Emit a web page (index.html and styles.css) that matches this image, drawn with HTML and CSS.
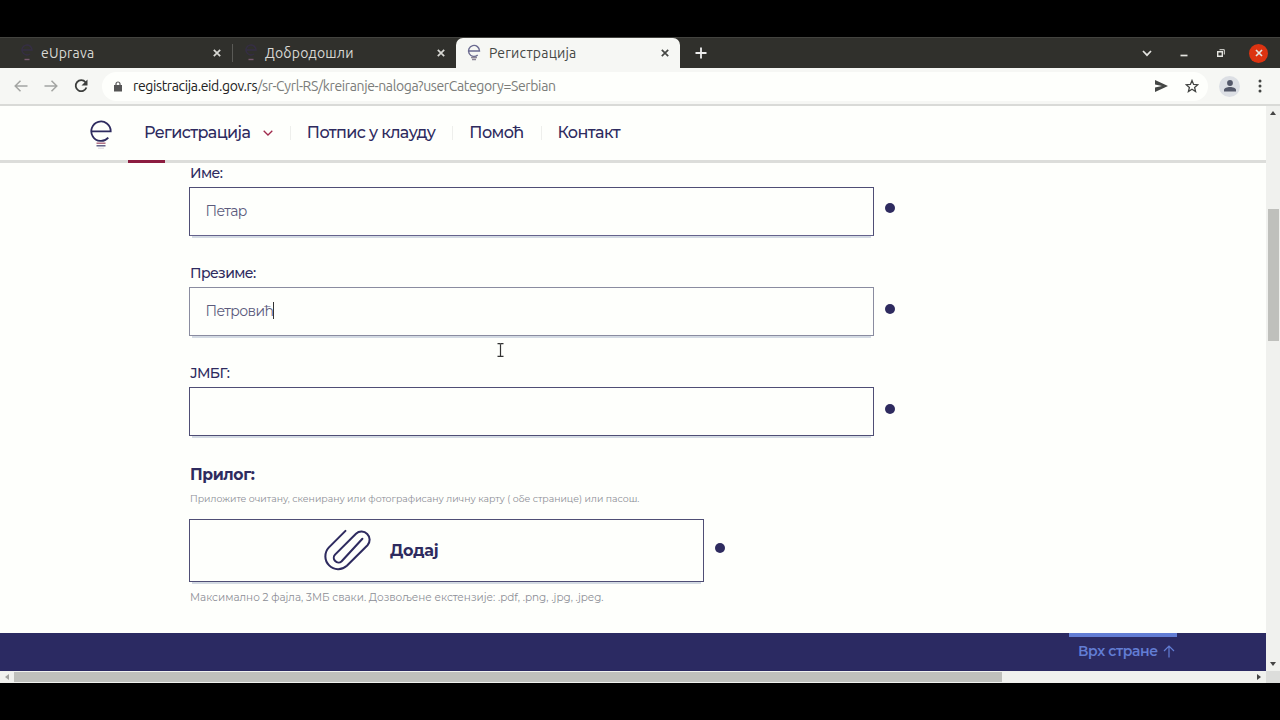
FILE: index.html
```html
<!DOCTYPE html>
<html lang="sr-Cyrl">
<head>
<meta charset="utf-8">
<title>Регистрација</title>
<link rel="stylesheet" href="styles.css">
</head>
<body>
<div class="window">

<div class="tabs">
	<div class="tab tab-first">
		<svg class="favicon" viewBox="0 0 14 18"><path d="M2 6h10a5 5 0 1 0-2 4" stroke="#352e44"/><path d="M4.500 15.500h5" stroke="#7a5a70"/></svg>
		<span class="tab-title">eUprava</span>
		<svg class="close" viewBox="0 0 8 8"><path d="M.8.8l6.400 6.400M7.200.8L.8 7.200"/></svg>
	</div>
	<div class="tab tab-second">
		<svg class="favicon" viewBox="0 0 14 18"><path d="M2 6h10a5 5 0 1 0-2 4" stroke="#352e44"/><path d="M4.500 15.500h5" stroke="#7a5a70"/></svg>
		<span class="tab-title">Добродошли</span>
		<svg class="close" viewBox="0 0 8 8"><path d="M.8.8l6.400 6.400M7.200.8L.8 7.200"/></svg>
	</div>
	<div class="tab tab-active">
		<svg class="favicon" viewBox="0 0 14 18"><path d="M1.500 7h11a5.500 5.500 0 1 0-1.800 4" stroke="#6a6a90"/><path d="M4 13.500h6M5 15.500h4" stroke="#8d8696"/></svg>
		<span class="tab-title">Регистрација</span>
		<svg class="close" viewBox="0 0 8 8"><path d="M.8.8l6.400 6.400M7.200.8L.8 7.200"/></svg>
	</div>
	<svg class="new-tab" viewBox="0 0 12 12"><path d="M6 .5v11M.5 6h11"/></svg>
	<div class="window-buttons">
		<svg width="10" height="7" viewBox="0 0 10 7"><path d="M1 1l4 4.200L9 1"/></svg>
		<svg class="minimize" width="8" height="8" viewBox="0 0 8 8"><path d="M.5 6.500h7"/></svg>
		<svg class="restore" width="8" height="8" viewBox="0 0 8 8"><path d="M.7 2.700h4.600v4.600H.7z"/><path d="M2.500.7h4.800v4.800" stroke-width="1"/></svg>
		<span class="close-window"><svg width="8" height="8" viewBox="0 0 8 8"><path d="M1 1l6 6M7 1L1 7"/></svg></span>
	</div>
</div>

<div class="toolbar">
	<svg class="back" viewBox="0 0 14 12"><path d="M13.500 6H1.200M6.500.7L1.200 6l5.300 5.300"/></svg>
	<svg class="forward" viewBox="0 0 14 12"><path d="M.5 6h12.300M7.500.7L12.800 6l-5.300 5.300"/></svg>
	<svg class="reload" viewBox="0 0 14 14"><path d="M11.500 3.200A5.500 5.500 0 1 0 12.400 8.500"/><path d="M13.500.5v6h-6z" fill="#3c3e3c" stroke="none"/></svg>
	<div class="address">
		<svg class="lock" viewBox="0 0 8 11"><path d="M2 5V3a2 2 0 0 1 4 0v2" fill="none" stroke="#555" stroke-width="1.200"/><path d="M0 4h8v6.500H0z" fill="#555"/></svg>
		<span class="host">registracija.eid.gov.rs</span><span class="path">/sr-Cyrl-RS/kreiranje-naloga?userCategory=Serbian</span>
		<svg class="send" viewBox="0 0 13 12"><path d="M0 0l13 6-13 6V7.500L7 6 0 4.500z"/></svg>
		<svg class="star" viewBox="0 0 14 14"><path d="M7 1.500l1.600 3.900 4.200.3-3.200 2.700 1 4.100L7 10.300l-3.600 2.200 1-4.100L1.200 5.700l4.200-.3z"/></svg>
	</div>
	<span class="profile"><svg width="12" height="12" viewBox="0 0 12 12"><circle cx="6" cy="3" r="2.900"/><path d="M0 11.500V10c0-2 3-3 6-3s6 1 6 3v1.500z"/></svg></span>
	<svg class="more" viewBox="0 0 4 14"><circle cx="2" cy="2" r="1.500"/><circle cx="2" cy="7" r="1.500"/><circle cx="2" cy="12" r="1.500"/></svg>
</div>

<div class="view">
	<div class="page">
		<header>
			<svg class="logo" viewBox="0 0 24 29"><path d="M3 11.300H21.700A9.700 9.700 0 1 0 19.300 17.600" fill="none" stroke="#2e2b5f" stroke-width="1.800"/><path d="M7.500 23.200h9" stroke="#a35a72" stroke-width="1.300"/><path d="M7.500 25.800h9" stroke="#4d4a76" stroke-width="1.300"/><path d="M9 28.200h6" stroke="#d8d6dd"/></svg>
			<nav>
				<a>Регистрација</a>
				<svg class="chevron" viewBox="0 0 10 6"><path d="M.7.7L5 5 9.300.7"/></svg>
				<i></i>
				<a>Потпис у клауду</a>
				<i></i>
				<a>Помоћ</a>
				<i></i>
				<a>Контакт</a>
			</nav>
			<div class="marker"></div>
		</header>

		<form>
			<label>Име:</label>
			<div class="row"><div class="input strong">Петар</div><b class="dot"></b></div>
			<label>Презиме:</label>
			<div class="row"><div class="input focused">Петровић<span class="caret"></span></div><b class="dot"></b></div>
			<label>ЈМБГ:</label>
			<div class="row"><div class="input"></div><b class="dot"></b></div>
			<h3>Прилог:</h3>
			<p class="hint">Приложите очитану, скенирану или фотографисану личну карту ( обе странице) или пасош.</p>
			<div class="row">
				<div class="upload">
					<svg class="clip" viewBox="0 0 48 42"><path d="M22 1.800L5.600 18.200A12.600 12.600 0 0 0 23.400 36L43.600 15.800A8 8 0 0 0 32.300 4.500L11.800 25A4.600 4.600 0 0 0 18.300 31.500L38.600 9.500"/></svg>
					<span>Додај</span>
				</div>
				<b class="dot"></b>
			</div>
			<p class="hint limits">Максимално 2 фајла, 3МБ сваки. Дозвољене екстензије: .pdf, .png, .jpg, .jpeg.</p>
		</form>

		<footer>
			<a class="to-top">Врх стране<svg viewBox="0 0 12 13"><path d="M6 12.500V1M1 6l5-5 5 5"/></svg></a>
		</footer>
	</div>
	<div class="vscroll">
		<svg viewBox="0 0 6 4"><path d="M0 4l3-4 3 4z"/></svg>
		<div class="thumb"></div>
		<svg viewBox="0 0 6 4"><path d="M0 0l3 4 3-4z"/></svg>
	</div>
</div>

<div class="hscroll">
	<svg class="off" viewBox="0 0 4 6"><path d="M4 0L0 3l4 3z"/></svg>
	<div class="thumb"></div>
	<svg viewBox="0 0 4 6"><path d="M0 0l4 3-4 3z"/></svg>
	<div class="corner"></div>
</div>

</div>
<svg class="cursor" viewBox="0 0 7 14"><path d="M.5.7h2.200l.8.600.8-.6h2.200M.5 13.300h2.200l.8-.6.8.6h2.200M3.500 1v12"/></svg>
</body>
</html>
```
FILE: styles.css
```css
* {
	box-sizing: border-box;
}

body {
	margin: 0;
	padding-top: 37px;
	height: 720px;
	overflow: hidden;
	background: #000;
	color: #2e2b5f;
	font-family: "Montserrat", "Inter", "Noto Sans", sans-serif;
}

svg {
	display: block;
	flex: none;
	fill: none;
}

.window {
	display: flex;
	flex-direction: column;
	height: 646px;
	background: #fefffc;
}

/* tab strip */
.tabs {
	display: flex;
	align-items: center;
	height: 31px;
	background: #30302c;
	border-top: 1px solid #43433f;
	color: #d8d8d4;
	font: 14px "Ubuntu", "Noto Sans", sans-serif;
	letter-spacing: 0.2px;
}

.tab {
	display: flex;
	align-items: center;
	height: 30px;
}

.tab-first {
	width: 233px;
	padding: 0 12px 0 20px;
	background: linear-gradient(#5a5a56, #5a5a56) right center / 1px 18px no-repeat;
}

.tab-second {
	width: 223px;
	padding: 0 11px;
}

.tab-active {
	width: 224px;
	padding: 0 11px;
	background: #f6f7f4;
	border-radius: 7px 7px 0 0;
	color: #454744;
}

.favicon {
	width: 14px;
	height: 18px;
	margin-right: 7px;
	stroke-width: 1.4;
}

.tab-active .favicon {
	margin-right: 8px;
}

.tab-title {
	padding-bottom: 1px;
	white-space: nowrap;
}

.close {
	width: 8px;
	height: 8px;
	margin-left: auto;
	stroke: currentColor;
	stroke-width: 1.7;
}

.new-tab {
	width: 12px;
	height: 12px;
	margin-left: 15px;
	stroke: #eee;
	stroke-width: 1.8;
}

.window-buttons {
	display: flex;
	align-items: center;
	margin-left: auto;
	padding-right: 12px;
	stroke: #e4e4e0;
	stroke-width: 1.7;
}

.minimize {
	margin-left: 28px;
}

.restore {
	margin-left: 29px;
	stroke-width: 1.4;
}

.close-window {
	display: flex;
	align-items: center;
	justify-content: center;
	width: 19px;
	height: 19px;
	margin-left: 24px;
	border-radius: 50%;
	background: #dc3311;
}

/* address bar */
.toolbar {
	display: flex;
	align-items: center;
	height: 38px;
	padding: 0 18px 0 14px;
	background: #f6f7f4;
	border-bottom: 2px solid #d9dad7;
	font: 14px "Ubuntu", "Noto Sans", sans-serif;
	letter-spacing: -0.365px;
}

.back, .forward {
	width: 14px;
	height: 12px;
	stroke: #a3a5a2;
	stroke-width: 1.5;
}

.forward {
	margin-left: 16px;
}

.reload {
	width: 14px;
	height: 14px;
	margin-left: 16px;
	stroke: #3c3e3c;
	stroke-width: 1.8;
}

.address {
	display: flex;
	align-items: center;
	width: 1106px;
	height: 29px;
	margin-left: 14px;
	padding: 0 9px 0 12px;
	border-radius: 15px;
	background: #fefffc;
}

.lock {
	width: 8px;
	height: 11px;
	margin-right: 11px;
}

.host {
	color: #222;
}

.path {
	color: #7b7d7a;
}

.send {
	width: 13px;
	height: 12px;
	margin-left: auto;
	fill: #444644;
}

.star {
	width: 14px;
	height: 14px;
	margin-left: 17px;
	stroke: #444644;
	stroke-width: 1.3;
}

.profile {
	display: flex;
	align-items: center;
	justify-content: center;
	width: 21px;
	height: 21px;
	margin-left: 11px;
	border-radius: 50%;
	background: #dcdfe4;
}

.profile svg {
	fill: #535869;
}

.more {
	width: 4px;
	height: 14px;
	margin-left: 18px;
	fill: #444644;
}

/* page */
.view {
	display: flex;
	height: 565px;
}

.page {
	display: flex;
	flex-direction: column;
	width: 1266px;
	overflow: hidden;
}

header {
	position: relative;
	display: flex;
	flex: none;
	align-items: center;
	height: 57px;
	padding: 0 0 1px 89px;
	border-bottom: 3px solid #dcddda;
}

.logo {
	width: 24px;
	height: 29px;
	margin-top: 3px;
}

nav {
	display: flex;
	align-items: center;
	margin-left: 31px;
	font-size: 16px;
	font-weight: 500;
	letter-spacing: -0.6px;
	white-space: nowrap;
}

nav i {
	width: 1px;
	height: 14px;
	margin: 0 16px 0 17px;
	background: #eeefec;
}

.chevron {
	width: 10px;
	height: 6px;
	margin-left: 12.5px;
	stroke: #a02a4c;
	stroke-width: 1.3;
}

.marker {
	position: absolute;
	left: 128px;
	bottom: -3px;
	width: 37px;
	height: 3px;
	background: #8c1d40;
}

form {
	padding-left: 189px;
}

label {
	display: block;
	width: max-content;
	margin-bottom: 4px;
	padding-left: 1px;
	font-size: 14px;
	font-weight: 500;
	letter-spacing: -0.6px;
	line-height: 20px;
}

.row {
	display: flex;
	align-items: center;
}

.input {
	display: flex;
	align-items: center;
	width: 685px;
	height: 49px;
	margin-bottom: 27.2px;
	padding: 0 0 2px 15.5px;
	border: 1px solid #4f4e75;
	box-shadow: 0 5px 0 -3px #d3dae3;
	color: #5b5b7c;
	font-size: 14px;
	letter-spacing: -0.6px;
}

.strong {
	border-bottom-color: #65638c;
}

.focused {
	border-color: #8a8ca0;
}

.caret {
	width: 1px;
	height: 17px;
	background: #333;
}

.dot {
	width: 10px;
	height: 10px;
	margin: 0 0 33.4px 11px;
	border-radius: 50%;
	background: #2e2b5f;
}

h3 {
	margin: 0;
	padding: 1px 0 0 1px;
	font-size: 15.6px;
	letter-spacing: -0.4px;
	line-height: 20px;
}

.hint {
	margin: 0;
	padding: 6px 0 0 1px;
	color: #8c8e96;
	font-size: 9.36px;
	line-height: 16px;
}

.upload {
	display: flex;
	align-items: center;
	width: 515px;
	height: 63px;
	margin-top: 12.4px;
	padding-left: 133px;
	border: 1px solid #4f4e75;
	box-shadow: 0 5px 0 -3px #d3dae3;
	font-size: 16px;
	font-weight: 700;
	letter-spacing: -0.15px;
}

.upload + .dot {
	margin-bottom: -7px;
}

.clip {
	width: 49px;
	height: 43px;
	margin-right: 18px;
	stroke: #2e2b5f;
	stroke-width: 2;
	stroke-linecap: round;
}

.limits {
	padding-top: 7.6px;
	font-size: 10.46px;
}

footer {
	height: 38px;
	margin-top: auto;
	padding-left: 1069px;
	background: #2b2a62;
}

.to-top {
	display: flex;
	align-items: center;
	width: 108px;
	height: 32px;
	padding-left: 9px;
	border-top: 4px solid #627dd4;
	color: #627dd4;
	font-size: 14px;
	font-weight: 600;
	letter-spacing: -0.35px;
	white-space: nowrap;
}

.to-top svg {
	width: 12px;
	height: 13px;
	margin-left: 5px;
	stroke: #627dd4;
	stroke-width: 1.2;
}

/* scrollbars */
.vscroll {
	display: flex;
	flex-direction: column;
	align-items: center;
	width: 14px;
	padding: 5px 0;
	background: #f0f1ee;
}

.vscroll svg {
	width: 6px;
	height: 4px;
	fill: #444;
}

.vscroll .thumb {
	width: 11px;
	height: 132px;
	margin: 94px 0 auto;
	background: #bfc0bc;
}

.hscroll {
	display: flex;
	align-items: center;
	height: 12px;
	padding-left: 5px;
	background: #f0f1ee;
}

.hscroll svg {
	width: 4px;
	height: 6px;
	fill: #444;
}

.hscroll .off {
	fill: #a0a19e;
}

.hscroll .thumb {
	width: 988px;
	height: 10px;
	margin: 0 auto 0 5px;
	background: #bfc0bc;
}

.corner {
	width: 14px;
	height: 12px;
	margin-left: 5px;
	background: #dcdddb;
}

.cursor {
	position: absolute;
	left: 497px;
	top: 343px;
	width: 7px;
	height: 14px;
	stroke: #333;
	stroke-width: 1.2;
}
```
